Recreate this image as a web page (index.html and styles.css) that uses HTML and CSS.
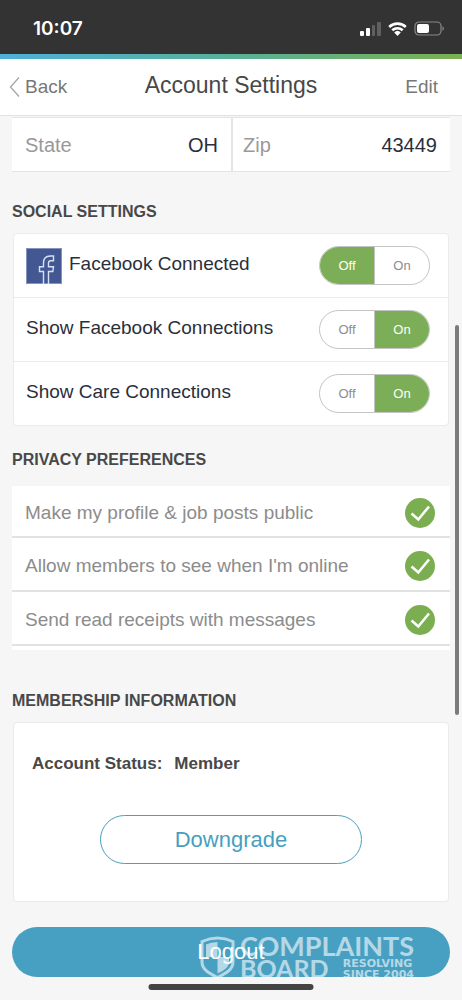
FILE: index.html
```html
<!DOCTYPE html>
<html lang="en">
<head>
<meta charset="utf-8">
<meta name="viewport" content="width=device-width, initial-scale=1">
<title>Account Settings</title>
<link rel="stylesheet" href="styles.css">
</head>
<body>
<div class="screen">
  <div class="status">
    <time class="clock">10:07</time>
    <div class="indicators">
      <svg width="21" height="14" viewBox="0 0 21 14" aria-hidden="true">
        <rect x="0" y="9" width="4" height="5" rx="1" fill="#fff"/>
        <rect x="6" y="6" width="4" height="8" rx="1" fill="#fff"/>
        <rect x="12" y="3" width="3" height="11" rx="1" fill="#606060"/>
        <rect x="17" y="0" width="4" height="14" rx="1" fill="#606060"/>
      </svg>
      <svg width="19" height="14" viewBox="0 0 19 14" aria-hidden="true">
        <g fill="none" stroke="#fff" stroke-width="2.6">
          <path d="M1.2 5a12 12 0 0 1 16.6 0"/>
          <path d="M4.3 8.3a7.6 7.6 0 0 1 10.4 0"/>
        </g>
        <path d="M6.2 10.4a4.8 4.8 0 0 1 6.6 0L9.5 13.9z" fill="#fff"/>
      </svg>
      <svg width="31" height="15" viewBox="0 0 31 15" aria-hidden="true">
        <rect x="1" y="1" width="26" height="13" rx="4" fill="none" stroke="#8a8a8a" stroke-width="1.2"/>
        <rect x="3" y="3" width="12" height="9" rx="2" fill="#fff"/>
        <path d="M28.5 5.2c1.8.6 1.8 4 0 4.6z" fill="#8a8a8a"/>
      </svg>
    </div>
  </div>
  <header class="header">
    <button class="nav back" type="button">
      <svg width="12" height="22" viewBox="0 0 12 22" aria-hidden="true"><path d="M10 1.500L1.500 11l8.500 9.500" fill="none" stroke="#a5a5a5" stroke-width="1.300"/></svg>
      Back
    </button>
    <h1 class="title">Account Settings</h1>
    <button class="nav edit" type="button">Edit</button>
  </header>
  <main class="content">
    <div class="fields">
      <label class="field">State <input class="value" type="text" value="OH"></label>
      <label class="field">Zip <input class="value" type="text" value="43449"></label>
    </div>

    <h2 class="heading">SOCIAL SETTINGS</h2>
    <div class="card">
      <div class="row" role="radiogroup" aria-labelledby="fb">
        <svg class="logo" width="36" height="36" viewBox="0 0 36 36" aria-hidden="true">
          <rect x=".5" y=".5" width="35" height="35" fill="#435893" stroke="#8494bd"/>
          <path d="M17.500 36V23.500h-4v-4.800h4V15c0-4.500 2.600-7 6.800-7h3.200v4.800h-2.700c-1.700 0-2.300.8-2.300 2.300v3.600h5l-.7 4.800h-4.300V36" fill="none" stroke="#d5e2f5" stroke-width="1.400"/>
        </svg>
        <span class="name" id="fb">Facebook Connected</span>
        <span class="toggle">
          <label class="option"><input type="radio" name="fb" checked>Off</label>
          <label class="option"><input type="radio" name="fb">On</label>
        </span>
      </div>
      <div class="row" role="radiogroup" aria-labelledby="showfb">
        <span class="name" id="showfb">Show Facebook Connections</span>
        <span class="toggle">
          <label class="option"><input type="radio" name="showfb">Off</label>
          <label class="option"><input type="radio" name="showfb" checked>On</label>
        </span>
      </div>
      <div class="row" role="radiogroup" aria-labelledby="care">
        <span class="name" id="care">Show Care Connections</span>
        <span class="toggle">
          <label class="option"><input type="radio" name="care">Off</label>
          <label class="option"><input type="radio" name="care" checked>On</label>
        </span>
      </div>
    </div>

    <h2 class="heading">PRIVACY PREFERENCES</h2>
    <div class="prefs">
      <label class="pref">Make my profile &amp; job posts public
        <span class="tick"><input type="checkbox" checked><svg width="30" height="30" viewBox="0 0 30 30" aria-hidden="true"><path d="M6.500 15.500l6.800 6L24 8.500" fill="none" stroke="#fff" stroke-width="2.600"/></svg></span>
      </label>
      <label class="pref">Allow members to see when I'm online
        <span class="tick"><input type="checkbox" checked><svg width="30" height="30" viewBox="0 0 30 30" aria-hidden="true"><path d="M6.500 15.500l6.800 6L24 8.500" fill="none" stroke="#fff" stroke-width="2.600"/></svg></span>
      </label>
      <label class="pref">Send read receipts with messages
        <span class="tick"><input type="checkbox" checked><svg width="30" height="30" viewBox="0 0 30 30" aria-hidden="true"><path d="M6.500 15.500l6.800 6L24 8.500" fill="none" stroke="#fff" stroke-width="2.600"/></svg></span>
      </label>
    </div>

    <h2 class="heading member-heading">MEMBERSHIP INFORMATION</h2>
    <div class="card member">
      <p class="account"><span>Account Status:</span><span>Member</span></p>
      <button class="downgrade" type="button">Downgrade</button>
    </div>

    <div class="footer">
      <button class="logout" type="button">Logout</button>
      <div class="watermark">
        <svg class="shield" width="35" height="43" viewBox="0 0 35 43" aria-hidden="true">
          <path d="M2 5.500Q17.500-1.500 33 5.500V26c0 7-6 11-15.500 15.500C8 37 2 33 2 26z" fill="none" stroke="#fff" stroke-width="3"/>
          <path d="M6 8.500Q11 6 17.500 6v15H29v5c0 5-4.500 8.500-11.500 11.500V21H6z" fill="#fff"/>
        </svg>
        <div class="brand">
          <span class="line">COMPLAINTS</span>
          <span class="line lower">BOARD <span class="tagline"><span>RESOLVING</span><span>SINCE 2004</span></span></span>
        </div>
      </div>
    </div>
  </main>
  <div class="scrollbar"></div>
  <div class="home"></div>
</div>
</body>
</html>
```
FILE: styles.css
```css
* { box-sizing: border-box; }
body {
  margin: 0;
  background: #f6f6f6;
  color: #29303c;
  font: 19px/24px "Liberation Sans", Arial, sans-serif;
}
button, input { font: inherit; }
button { cursor: pointer; }
.screen { position: relative; min-height: 100vh; overflow: hidden; }

.status {
  display: flex;
  justify-content: space-between;
  align-items: center;
  height: 54px;
  padding: 3px 17px 0 33px;
  background: #333;
  color: #fff;
}
.clock { font: 600 19px/24px Inter, sans-serif; }
.indicators { display: flex; align-items: center; gap: 7px; }

.header {
  display: grid;
  grid-template-columns: 1fr auto 1fr;
  align-items: center;
  height: 62px;
  border-top: 5px solid;
  border-image: linear-gradient(90deg, #4fb0d8, #58b09a 50%, #7cb051) 5 0 0;
  background: #fff;
  padding: 0 9px 5px;
  box-shadow: inset 0 -1px #e2e2e2;
}
.title { margin: 0; font-size: 23px; font-weight: 400; color: #484848; }
.nav {
  display: flex;
  align-items: center;
  gap: 4px;
  padding: 3px 0 0;
  border: 0;
  background: none;
  color: #777;
}
.edit { justify-self: end; padding-right: 15px; }

.content { padding: 1px 12px 23px; }
.fields {
  display: grid;
  grid-template-columns: 1fr 1fr;
  border: solid #e4e4e4;
  border-width: 1px 0;
}
.field {
  display: flex;
  align-items: center;
  min-width: 0;
  height: 53px;
  padding: 0 13px;
  background: #fff;
  color: #999;
  font-size: 20px;
}
.field + .field { border-left: 2px solid #e4e4e4; padding-left: 10px; }
.value {
  flex: 1;
  min-width: 0;
  padding: 0;
  border: 0;
  background: none;
  color: #29303c;
  text-align: right;
}

.heading { margin: 28px 0 9px; font-size: 16px; line-height: 24px; color: #484848; }
.card { margin: 0 1px; border: 1px solid #ebebeb; border-radius: 4px; background: #fff; }
.row { display: flex; align-items: center; height: 64px; padding: 0 18px 0 12px; }
.row:first-child { height: 63px; }
.row + .row { border-top: 1px solid #ebebeb; }
.logo { margin-right: 7px; }
.name { flex: 1; padding-bottom: 4px; }
.toggle {
  display: flex;
  width: 111px;
  height: 39px;
  border: 1px solid #c4c4c4;
  border-radius: 20px;
  overflow: hidden;
}
.option {
  position: relative;
  flex: 1;
  display: grid;
  place-items: center;
  color: #8c8c8c;
  font-size: 13px;
  cursor: pointer;
}
.option + .option { border-left: 1px solid #c4c4c4; }
.option:has(:checked) { background: #7bae57; color: #fff; }
.option input { position: absolute; inset: 0; margin: 0; opacity: 0; }

.card + .heading { margin-top: 22px; margin-bottom: 14px; }
.prefs { padding-bottom: 4px; background: linear-gradient(#fff, #fff); }
.pref {
  display: flex;
  align-items: center;
  justify-content: space-between;
  height: 54px;
  padding: 3px 15px 0 13px;
  border-bottom: 2px solid #e2e2e2;
  color: #8c8c8c;
}
.pref:first-child { height: 52px; }
.tick { display: grid; }
.tick > * { grid-area: 1 / 1; }
.tick input {
  appearance: none;
  width: 30px;
  height: 30px;
  margin: 0;
  border-radius: 50%;
  background: #c4c4c4;
}
.tick input:checked { background: #7bae50; }
.tick svg { pointer-events: none; z-index: 1; }

.heading.member-heading { margin-top: 39px; }
.member { padding: 29px 18px 37px; }
.account {
  display: flex;
  gap: 12px;
  margin: 0 0 39px;
  font-size: 17px;
  font-weight: 700;
  color: #484848;
}
.downgrade {
  display: block;
  width: 66%;
  height: 49px;
  margin: 0 auto;
  border: 1px solid #479fbf;
  border-radius: 25px;
  background: #fff;
  color: #479fbf;
  font-size: 22px;
}
.footer { position: relative; margin-top: 25px; }
.logout {
  display: block;
  width: 100%;
  height: 50px;
  border: 0;
  border-radius: 25px;
  background: #479fc1;
  color: #fff;
  font-size: 22px;
}
.watermark {
  position: absolute;
  top: 7px;
  right: 36px;
  display: flex;
  gap: 5px;
  color: #fff;
  opacity: .6;
  pointer-events: none;
}
.shield { margin-top: 2px; }
.brand { font: 700 27px/23px Lato, sans-serif; }
.line { display: block; }
.lower { display: flex; align-items: center; justify-content: space-between; font-size: 25px; }
.tagline { display: grid; font: 700 11px/11px "DejaVu Sans", sans-serif; }

.scrollbar {
  position: absolute;
  top: 325px;
  right: 3px;
  width: 4px;
  height: 390px;
  border-radius: 2px;
  background: #7c7c7c;
}
.home {
  position: absolute;
  bottom: 10px;
  left: 50%;
  width: 165px;
  height: 6px;
  border-radius: 3px;
  background: #444;
  transform: translateX(-50%);
}
```
